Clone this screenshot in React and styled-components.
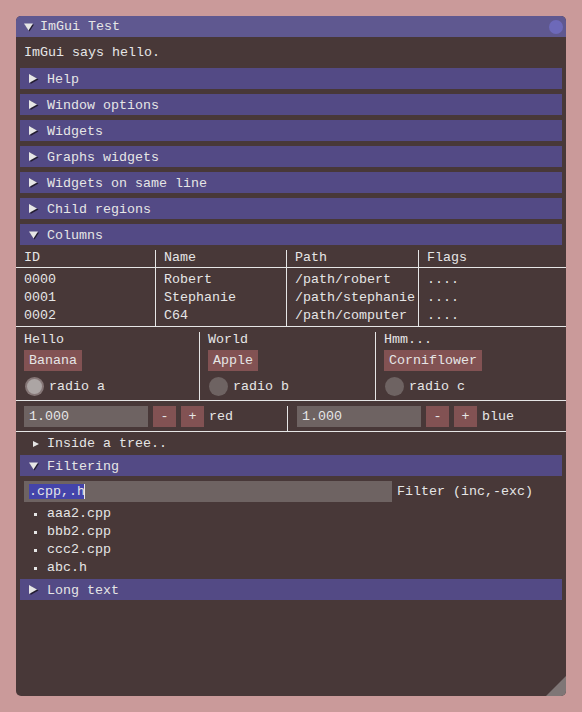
import styled, { createGlobalStyle } from "styled-components";

const mono = `"Liberation Mono", "DejaVu Sans Mono", monospace`;
const ink = "#e6e6e6";

const GlobalStyle = createGlobalStyle`
  html, body {
    margin: 0;
    background: #ca9a9a;
  }
  body {
    font-family: ${mono};
    font-size: 13.33px;
    color: ${ink};
  }
  * {
    box-sizing: border-box;
  }
`;

const Page = styled.div`
  padding: 16px;
`;

const Window = styled.div`
  position: relative;
  width: 550px;
  height: 680px;
  background: #483838;
  border-radius: 5px;
  overflow: hidden;
  display: flex;
  flex-direction: column;
`;

const TitleBar = styled.div`
  display: flex;
  align-items: center;
  height: 21px;
  flex-shrink: 0;
  padding: 0 3px 0 8px;
  background: #5f5890;
`;

const TitleText = styled.span`
  flex: 1;
  line-height: 17px;
  white-space: pre;
`;

const CloseDot = styled.span`
  width: 14px;
  height: 14px;
  border-radius: 50%;
  background: #6d69b9;
`;

const TextLine = styled.div`
  margin-top: ${(p) => p.$top || 0}px;
  padding-left: 8px;
  line-height: 17px;
  white-space: pre;
`;

const HeaderBar = styled.div`
  display: flex;
  align-items: center;
  height: 21px;
  flex-shrink: 0;
  margin: ${(p) => p.$top}px 4px 0;
  padding-left: 9px;
  background: #534a85;
`;

const HeaderLabel = styled.span`
  margin-top: 2px;
  line-height: 17px;
  white-space: pre;
`;

const ArrowSvg = styled.svg`
  flex-shrink: 0;
  margin-right: ${(p) => p.$space}px;
`;

const Arrow = ({ open, space = 7 }) => (
  <ArrowSvg width="11" height="11" viewBox="0 0 11 11" $space={space}>
    {open ? (
      <>
        <polygon points="1,3.5 10,3.5 5.5,10.5" fill="#221c30" />
        <polygon points="0,2.5 9,2.5 4.5,9.5" fill={ink} />
      </>
    ) : (
      <>
        <polygon points="1.5,2 9.5,6.5 1.5,11" fill="#221c30" />
        <polygon points="0,1 8,5.5 0,10" fill={ink} />
      </>
    )}
  </ArrowSvg>
);

const Header = ({ label, open, top = 5 }) => (
  <HeaderBar $top={top}>
    <Arrow open={open} />
    <HeaderLabel>{label}</HeaderLabel>
  </HeaderBar>
);

// columns blocks: every block ends with a full-width rule
const ColumnsBlock = styled.div`
  padding-top: 5px;
  border-bottom: 1px solid ${ink};
`;

const ColumnsRow = styled.div`
  display: grid;
  grid-template-columns: ${(p) => p.$columns};
  border-bottom: ${(p) => (p.$ruled ? `1px solid ${ink}` : "none")};
`;

const Cell = styled.div`
  padding-left: ${(p) => p.$pad ?? 8}px;
  white-space: pre;
  &:not(:first-child) {
    border-left: 1px solid ${ink};
  }
`;

const HeadCell = styled(Cell)`
  line-height: 15px;
  padding-bottom: 2px;
`;

const DataCell = styled(Cell)`
  line-height: 18px;
  padding-top: 3px;
  padding-bottom: 1px;
`;

const WidgetCell = styled(Cell)`
  display: flex;
  flex-direction: column;
  align-items: flex-start;
  padding-bottom: 4px;
`;

const SliderCell = styled(Cell)`
  display: flex;
  align-items: center;
  gap: 5px;
  padding-bottom: 4px;
`;

const CellLabel = styled.span`
  line-height: 15px;
`;

const Button = styled.span`
  display: inline-block;
  margin-top: ${(p) => p.$top || 0}px;
  height: 21px;
  line-height: 21px;
  padding: 0 5px;
  min-width: ${(p) => p.$min || 0}px;
  text-align: center;
  background: #825253;
  white-space: pre;
`;

const Field = styled.span`
  display: inline-block;
  width: ${(p) => p.$width}px;
  height: 21px;
  line-height: 21px;
  padding-left: 5px;
  background: #6e6362;
  white-space: pre;
`;

const Selection = styled.span`
  background: #4444aa;
  box-shadow: inset -1px 0 0 ${ink};
`;

const RadioRow = styled.div`
  display: flex;
  align-items: center;
  margin-top: 6px;
  height: 19px;
  line-height: 19px;
  white-space: pre;
`;

const RadioDot = styled.span`
  display: flex;
  align-items: center;
  justify-content: center;
  width: 19px;
  height: 19px;
  margin: 0 5px 0 1px;
  border-radius: 50%;
  background: ${(p) => (p.$checked ? "#867777" : "#6e6362")};
  &::after {
    content: "";
    display: ${(p) => (p.$checked ? "block" : "none")};
    width: 15px;
    height: 15px;
    border-radius: 50%;
    background: #aca5a4;
  }
`;

const TreeRow = styled.div`
  display: flex;
  align-items: center;
  margin-top: 3px;
  height: 17px;
  padding-left: 17px;
  line-height: 17px;
  white-space: pre;
`;

const FilterRow = styled.div`
  display: flex;
  align-items: center;
  gap: 5px;
  margin-top: 5px;
  padding-left: 8px;
  line-height: 21px;
  white-space: pre;
`;

const BulletList = styled.div`
  margin-top: 3px;
`;

const BulletRow = styled.div`
  display: flex;
  align-items: center;
  height: 18px;
  padding-left: 18px;
  line-height: 18px;
`;

const BulletDot = styled.span`
  width: 3px;
  height: 3px;
  margin-right: 10px;
  background: ${ink};
`;

const ResizeGrip = styled.div`
  position: absolute;
  right: 0;
  bottom: 0;
  width: 20px;
  height: 20px;
  background: #7f7676;
  clip-path: polygon(100% 0, 100% 100%, 0 100%);
`;

const sections = [
  "Help",
  "Window options",
  "Widgets",
  "Graphs widgets",
  "Widgets on same line",
  "Child regions",
];

const people = [
  { id: "0000", name: "Robert", path: "/path/robert", flags: "...." },
  { id: "0001", name: "Stephanie", path: "/path/stephanie", flags: "...." },
  { id: "0002", name: "C64", path: "/path/computer", flags: "...." },
];

const fruits = [
  { title: "Hello", button: "Banana", radio: "radio a", checked: true },
  { title: "World", button: "Apple", radio: "radio b" },
  { title: "Hmm...", button: "Corniflower", radio: "radio c" },
];

const sliders = [
  { label: "red", pad: 8 },
  { label: "blue", pad: 9 },
];

const files = ["aaa2.cpp", "bbb2.cpp", "ccc2.cpp", "abc.h"];

const tableCols = "139px 131px 132px 148px";

export default function App() {
  return (
    <Page>
      <GlobalStyle />
      <Window>
        <TitleBar>
          <Arrow open space={5} />
          <TitleText>ImGui Test</TitleText>
          <CloseDot />
        </TitleBar>

        <TextLine $top={7}>ImGui says hello.</TextLine>

        {sections.map((s, i) => (
          <Header key={s} label={s} top={i === 0 ? 7 : 5} />
        ))}
        <Header label="Columns" open />

        <ColumnsBlock>
          <ColumnsRow $columns={tableCols} $ruled>
            <HeadCell>ID</HeadCell>
            <HeadCell>Name</HeadCell>
            <HeadCell>Path</HeadCell>
            <HeadCell>Flags</HeadCell>
          </ColumnsRow>
          <ColumnsRow $columns={tableCols}>
            {["id", "name", "path", "flags"].map((key) => (
              <DataCell key={key}>
                {people.map((p) => (
                  <div key={p.id}>{p[key]}</div>
                ))}
              </DataCell>
            ))}
          </ColumnsRow>
        </ColumnsBlock>

        <ColumnsBlock>
          <ColumnsRow $columns="183px 176px 191px">
            {fruits.map((f) => (
              <WidgetCell key={f.title}>
                <CellLabel>{f.title}</CellLabel>
                <Button $top={3}>{f.button}</Button>
                <RadioRow>
                  <RadioDot $checked={f.checked} />
                  {f.radio}
                </RadioRow>
              </WidgetCell>
            ))}
          </ColumnsRow>
        </ColumnsBlock>

        <ColumnsBlock>
          <ColumnsRow $columns="271px 279px">
            {sliders.map((s) => (
              <SliderCell key={s.label} $pad={s.pad}>
                <Field $width={124}>1.000</Field>
                <Button $min={23}>-</Button>
                <Button $min={23}>+</Button>
                <span>{s.label}</span>
              </SliderCell>
            ))}
          </ColumnsRow>
        </ColumnsBlock>

        <TreeRow>
          <ArrowSvg width="6" height="6" viewBox="0 0 6 6" $space={8}>
            <polygon points="0,0 6,3 0,6" fill={ink} />
          </ArrowSvg>
          Inside a tree..
        </TreeRow>

        <Header label="Filtering" open top={3} />
        <FilterRow>
          <Field $width={368}>
            <Selection>.cpp,.h</Selection>
          </Field>
          <span>Filter (inc,-exc)</span>
        </FilterRow>
        <BulletList>
          {files.map((f) => (
            <BulletRow key={f}>
              <BulletDot />
              {f}
            </BulletRow>
          ))}
        </BulletList>

        <Header label="Long text" top={2} />

        <ResizeGrip />
      </Window>
    </Page>
  );
}
